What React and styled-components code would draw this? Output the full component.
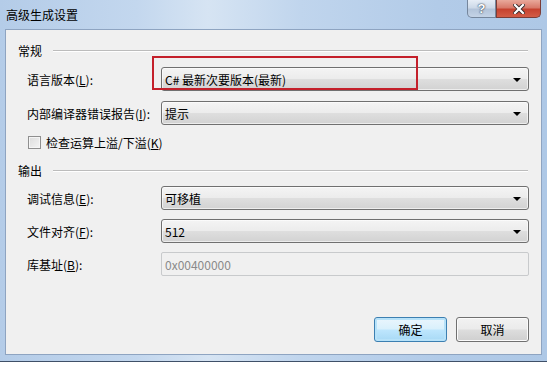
import React from 'react';
import styled, { createGlobalStyle } from 'styled-components';

const GlobalStyle = createGlobalStyle`
  html, body {
    margin: 0;
    padding: 0;
    background: #ffffff;
  }
  body {
    font-family: "Noto Sans CJK SC", "Microsoft YaHei", "Liberation Sans", sans-serif;
    font-size: 12px;
    color: #000;
  }
`;

const Window = styled.div`
  position: relative;
  width: 547px;
  height: 362px;
  box-sizing: border-box;
  padding: 0 5px 6px 5px;
  display: flex;
  flex-direction: column;
  background: linear-gradient(90deg, #b4cce8 0%, #c3d7ee 25%, #d6e4f3 38%, #c0d5ed 55%, #b2cbe8 80%, #aec8e6 100%);
  border-bottom: 1px solid #3f5068;
`;

const TitleBar = styled.div`
  height: 29px;
  display: flex;
  justify-content: space-between;
  align-items: flex-start;
`;

const Title = styled.div`
  padding: 7px 0 0 1px;
  line-height: 16px;
  font-size: 12px;
  color: #000;
`;

const CaptionButtons = styled.div`
  display: flex;
  margin-right: 1px;
`;

const CaptionButton = styled.div`
  height: 18px;
  width: ${(p) => p.$width}px;
  box-sizing: border-box;
  display: flex;
  align-items: center;
  justify-content: center;
  border: 1px solid ${(p) => (p.$close ? '#7b3c37' : '#75869c')};
  border-top: none;
  border-radius: ${(p) => (p.$close ? '0 0 5px 0' : '0 0 0 5px')};
  background: ${(p) =>
    p.$close
      ? 'linear-gradient(180deg, #e9a99b 0%, #d87a6a 45%, #c6422f 55%, #d35c46 100%)'
      : 'linear-gradient(180deg, #e6edf6 0%, #cdd9e8 45%, #b3c4da 55%, #c4d3e6 100%)'};
  color: #fff;
  font-family: "Liberation Sans", sans-serif;
  font-weight: bold;
  font-size: 13px;
  text-shadow: 0 0 2px #2b3a4d, 0 0 1px #2b3a4d;
`;

const Client = styled.div`
  flex: 1;
  display: flex;
  flex-direction: column;
  background: #f0f0f0;
  border: 1px solid #8ea4c1;
  padding: 12px 12px 12px 12px;
`;

const SectionHeader = styled.div`
  display: flex;
  align-items: center;
  height: 17px;
  margin-top: ${(p) => p.$top || 0}px;
`;

const SectionLine = styled.div`
  flex: 1;
  margin-left: 11px;
  margin-right: 1px;
  height: 0;
  border-top: 1px solid #bcbcbc;
  border-bottom: 1px solid #ffffff;
`;

const Fields = styled.div`
  display: flex;
  flex-direction: column;
  gap: ${(p) => p.$gap}px;
  margin-top: ${(p) => p.$top}px;
  padding-left: 9px;
`;

const Row = styled.div`
  display: grid;
  grid-template-columns: 134px 1fr;
  align-items: center;
  height: 24px;
`;

const Label = styled.span`
  white-space: nowrap;
  u {
    text-decoration: underline;
  }
`;

const Combo = styled.div`
  height: 24px;
  box-sizing: border-box;
  display: flex;
  align-items: center;
  justify-content: space-between;
  padding: 0 7px 0 3px;
  border: 1px solid #707070;
  border-radius: 3px;
  background: linear-gradient(180deg, #f4f4f4 0%, #ececec 48%, #dedede 52%, #d2d2d2 100%);
  box-shadow: inset 0 0 0 1px rgba(255, 255, 255, 0.6);
`;

const Arrow = styled.span`
  width: 0;
  height: 0;
  border-left: 4px solid transparent;
  border-right: 4px solid transparent;
  border-top: 4px solid #000;
  margin-top: 1px;
`;

const TextBox = styled.div`
  height: 24px;
  box-sizing: border-box;
  display: flex;
  align-items: center;
  padding: 0 3px;
  border: 1px solid #c8cacc;
  border-radius: 2px;
  background: #f0f0f0;
  color: #8a8a8a;
`;

const CheckRow = styled.label`
  display: flex;
  align-items: center;
  gap: 5px;
  height: 16px;
  margin-top: -1px;
  padding-left: 1px;
`;

const CheckBox = styled.span`
  width: 13px;
  height: 13px;
  box-sizing: border-box;
  border: 1px solid #8f8f8f;
  background: linear-gradient(135deg, #dcdcdc 0%, #f4f4f4 100%);
  box-shadow: inset 0 0 0 1px #f5f5f5;
`;

const ButtonBar = styled.div`
  margin-top: auto;
  display: flex;
  justify-content: flex-end;
  gap: 9px;
`;

const Button = styled.div`
  width: 73px;
  height: 25px;
  box-sizing: border-box;
  display: flex;
  align-items: center;
  justify-content: center;
  border: 1px solid ${(p) => (p.$default ? '#3c7fb1' : '#707070')};
  border-radius: 3px;
  background: ${(p) =>
    p.$default
      ? 'linear-gradient(180deg, #eaf6fd 0%, #d9f0fc 48%, #bee6fd 52%, #a7d9f5 100%)'
      : 'linear-gradient(180deg, #f2f2f2 0%, #ebebeb 48%, #dddddd 52%, #cfcfcf 100%)'};
  box-shadow: ${(p) => (p.$default ? 'inset 0 0 0 2px #b7e2f9' : 'inset 0 0 0 1px #fbfbfb')};
`;

const Highlight = styled.div`
  position: absolute;
  left: 152px;
  top: 56px;
  width: 266px;
  height: 34px;
  box-sizing: border-box;
  border: 2px solid #c4202b;
  pointer-events: none;
`;

const fields1 = [
  { label: '语言版本', key: 'L', value: 'C# 最新次要版本(最新)' },
  { label: '内部编译器错误报告', key: 'I', value: '提示' },
];

const fields2 = [
  { label: '调试信息', key: 'E', value: '可移植' },
  { label: '文件对齐', key: 'F', value: '512' },
];

const FieldLabel = ({ label, k }) => (
  <Label>
    {label}(<u>{k}</u>):
  </Label>
);

export default function App() {
  return (
    <>
      <GlobalStyle />
      <Window>
        <TitleBar>
          <Title>高级生成设置</Title>
          <CaptionButtons>
            <CaptionButton $width={29}>?</CaptionButton>
            <CaptionButton $width={45} $close>
              <svg width="12" height="10" viewBox="0 0 12 10">
                <path d="M2 1 L10 9 M10 1 L2 9" stroke="#3a2a2a" strokeWidth="4" strokeLinecap="square" />
                <path d="M2 1 L10 9 M10 1 L2 9" stroke="#ffffff" strokeWidth="2.2" strokeLinecap="square" />
              </svg>
            </CaptionButton>
          </CaptionButtons>
        </TitleBar>
        <Client>
          <SectionHeader>
            常规
            <SectionLine />
          </SectionHeader>
          <Fields $top={8} $gap={10}>
            {fields1.map((f) => (
              <Row key={f.key}>
                <FieldLabel label={f.label} k={f.key} />
                <Combo>
                  <span>{f.value}</span>
                  <Arrow />
                </Combo>
              </Row>
            ))}
            <CheckRow>
              <CheckBox />
              <span>
                检查运算上溢/下溢(<u>K</u>)
              </span>
            </CheckRow>
          </Fields>
          <SectionHeader $top={12}>
            输出
            <SectionLine />
          </SectionHeader>
          <Fields $top={7} $gap={9}>
            {fields2.map((f) => (
              <Row key={f.key}>
                <FieldLabel label={f.label} k={f.key} />
                <Combo>
                  <span>{f.value}</span>
                  <Arrow />
                </Combo>
              </Row>
            ))}
            <Row>
              <FieldLabel label="库基址" k="B" />
              <TextBox>0x00400000</TextBox>
            </Row>
          </Fields>
          <ButtonBar>
            <Button $default>确定</Button>
            <Button>取消</Button>
          </ButtonBar>
        </Client>
        <Highlight />
      </Window>
    </>
  );
}
